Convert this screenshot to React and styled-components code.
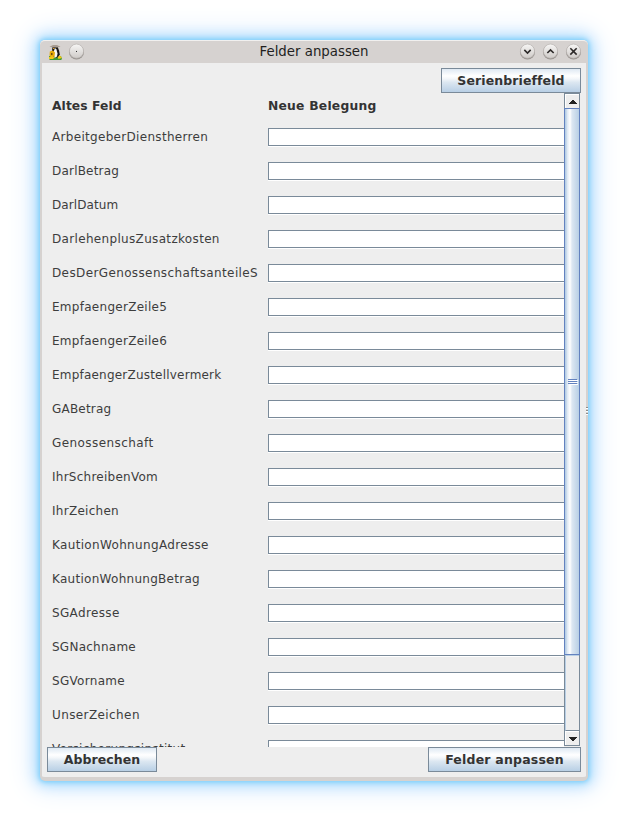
import React from 'react';
import styled, { createGlobalStyle } from 'styled-components';

const GlobalStyle = createGlobalStyle`
  * { box-sizing: border-box; }
  body { margin: 0; background: #fff; overflow: hidden; }
`;

const Desktop = styled.main`
  width: 628px;
  height: 821px;
  padding: 40px;
  background: #fff;
  font-family: 'DejaVu Sans', sans-serif;
  color: #333;
`;

const Window = styled.section`
  display: flex;
  flex-direction: column;
  width: 548px;
  height: 741px;
  border: solid #d6d2d0;
  border-width: 0 2px 4px;
  border-radius: 5px;
  background: #eee;
  box-shadow: 0 0 5px 1px #77cdfb, 0 0 14px 4px #a9dcfc, 0 0 28px 7px #dcebff;
`;

const TitleBar = styled.header`
  display: grid;
  grid-template-columns: 70px 1fr 70px;
  align-items: center;
  height: 23px;
  margin: 0 -2px;
  padding: 0 6px 1px;
  border-top: 1px solid #f1f0ef;
  border-radius: 5px 5px 0 0;
  background: #d6d2d0;
`;

const TitleGroup = styled.div`
  display: flex;
  align-items: center;
  gap: ${(p) => p.$gap}px;
  padding-left: ${(p) => (p.$end ? 0 : 1)}px;
  justify-content: ${(p) => (p.$end ? 'flex-end' : 'flex-start')};
`;

const Title = styled.h1`
  margin: 0;
  font-size: 13.33px;
  font-weight: 400;
  line-height: 20px;
  text-align: center;
  color: #221f1e;
  white-space: nowrap;
`;

const Body = styled.div`
  flex: 1;
  display: flex;
  flex-direction: column;
  min-height: 0;
  padding: 5px 5px;
`;

const ButtonRow = styled.div`
  display: flex;
  flex: none;
  justify-content: ${(p) => p.$justify};
`;

const Button = styled.button`
  width: ${(p) => p.$width}px;
  height: 25px;
  padding: 0;
  border: 1px solid #7a8a99;
  background: linear-gradient(#dfe9f3 0%, #fff 30%, #f4f7fa 42%, #dce7f1 58%, #b8cfe5 100%);
  font: bold 12.5px/22px 'DejaVu Sans', sans-serif;
  letter-spacing: ${(p) => p.$tracking || 0}px;
  color: #333;
`;

const ScrollPane = styled.div`
  flex: none;
  display: flex;
  height: 654px;
  padding-right: 1px;
  overflow: hidden;
`;

const Form = styled.div`
  flex: 1;
  padding-left: 5px;
`;

const FieldRow = styled.div`
  display: grid;
  grid-template-columns: 216px 1fr;
  height: ${(p) => p.$height || 34}px;
`;

const Heading = styled.div`
  padding-top: 5px;
  font-size: 12.3px;
  font-weight: 700;
  line-height: 16px;
  letter-spacing: ${(p) => p.$tracking}px;
`;

const Label = styled.label`
  height: 18px;
  font-size: 12px;
  line-height: 18px;
  letter-spacing: ${(p) => p.$tracking}px;
  white-space: nowrap;
  color: #3d3d3d;
`;

const Input = styled.input`
  width: 100%;
  height: 18px;
  padding: 0 3px;
  border: solid #7a8a99;
  border-width: 1px 0 1px 1px;
  border-radius: 0;
  outline: 0;
  background: #fff;
  box-shadow: 0 1px 0 #fff;
`;

const ScrollBar = styled.div`
  display: flex;
  flex-direction: column;
  width: 16px;
  height: 653px;
  border: 1px solid #7a8a99;
  background: #eee;
`;

const Arrow = styled.div`
  display: flex;
  flex: none;
  align-items: center;
  justify-content: center;
  height: 14px;
  padding-left: 1px;
  border: 1px solid #fff;
  border-width: 1px 0 0 1px;
`;

const Thumb = styled.div`
  display: flex;
  flex: none;
  align-items: center;
  justify-content: center;
  height: 547px;
  margin: 0 -1px;
  padding-left: 2px;
  border: 1px solid #6382bf;
  background: linear-gradient(90deg, #b8cfe5 0 1px, #dbe6f2 2px, #fff 5px, #dce7f2 7px, #b8cfe5 14px);
`;

const Track = styled.div`
  flex: 1;
  border-left: 1px solid #b8cfe5;
  border-top: 1px solid #b8cfe5;
  border-bottom: 1px solid #7a8a99;
`;

const Grip = styled.i`
  width: 2px;
  height: 8px;
  position: absolute;
  left: 586px;
  top: 407px;
  background: repeating-linear-gradient(#8f8b88 0 1px, #fff 1px 2px, #d6d2d0 2px 3px);
`;

const fields = [
  ['ArbeitgeberDienstherren', 0.31],
  ['DarlBetrag', 0.2],
  ['DarlDatum', 0.08],
  ['DarlehenplusZusatzkosten', 0.33],
  ['DesDerGenossenschaftsanteileS', 0.38],
  ['EmpfaengerZeile5', 0.28],
  ['EmpfaengerZeile6', 0.28],
  ['EmpfaengerZustellvermerk', 0.21],
  ['GABetrag', 0.2],
  ['Genossenschaft', 0.42],
  ['IhrSchreibenVom', 0.25],
  ['IhrZeichen', 0.28],
  ['KautionWohnungAdresse', 0.34],
  ['KautionWohnungBetrag', 0.28],
  ['SGAdresse', 0.35],
  ['SGNachname', 0.25],
  ['SGVorname', 0.3],
  ['UnserZeichen', 0.4],
  ['Versicherungsinstitut', 0.31],
];

function Penguin() {
  return (
    <svg width="16" height="18" viewBox="0 0 16 18">
      <path d="M2 13h12l1 3-1 1H3l-1-1z" fill="#3d9a32" />
      <path d="M5.500 3.500h5l1.500 4 .8 4-1.800 3H6L5 8z" fill="#161616" />
      <path d="M8 5l1.500 1.500 1 4-.5 3-2.500 1.500L6.500 9z" fill="#f7f7f4" />
      <path d="M2.800 8.500l3.200-1 2 2-.5 4-3 1-2-2z" fill="#e5aa0b" />
      <path d="M4 10h1.500v2H4z" fill="#6d4a10" />
      <path d="M2 14l3-1 2.500 1.500L6 16H2zM10.500 14l2.500-1.500 2 2.500-3.500 1z" fill="#f2c518" />
      <path d="M2.500 3.800L6 2h4l3.500 1.800L10 4.500H6z" fill="#a89c92" />
      <path d="M6 5h1.500v1H6z" fill="#e9a322" />
    </svg>
  );
}

const glyphs = {
  dot: 'M7.5 7.5h1v1h-1z',
  down: 'M5 6.5l3 3 3-3',
  up: 'M5 9.5l3-3 3 3',
  close: 'M5 5l6 6M11 5l-6 6',
};

function RoundButton({ kind }) {
  const id = `knob-${kind}`;
  return (
    <svg width="17" height="18" viewBox="0 0 16 17">
      <defs>
        <linearGradient id={id} x1="0" y1="0" x2="0" y2="1">
          <stop offset="0" stopColor="#f7f6f5" />
          <stop offset="1" stopColor="#cfcbc8" />
        </linearGradient>
      </defs>
      <circle cx="8" cy="8.5" r="7.1" fill="#98938f" />
      <circle cx="8" cy="7.700" r="6.7" fill={`url(#${id})`} stroke="#b5b0ad" strokeWidth=".6" />
      <path d={glyphs[kind]} fill={kind === 'dot' ? '#333' : 'none'} stroke="#2d2a29" strokeWidth={kind === 'dot' ? 0 : 1.5} />
    </svg>
  );
}

const ArrowIcon = ({ down }) => (
  <svg width="8" height="4" viewBox="0 0 8 4" shapeRendering="crispEdges">
    <path d={down ? 'M0 0h8v1h-1v1h-1v1h-1v1h-2v-1h-1v-1h-1v-1h-1z' : 'M3 0h2v1h1v1h1v1h1v1h-8v-1h1v-1h1v-1h1z'} fill="#222" />
  </svg>
);

const ThumbGrip = () => (
  <svg width="10" height="6" viewBox="0 0 10 6" shapeRendering="crispEdges">
    <path d="M1 1h9v1H1zM1 3h9v1H1zM1 5h9v1H1z" fill="#fff" />
    <path d="M0 0h9v1H0zM0 2h9v1H0zM0 4h9v1H0z" fill="#6382bf" />
  </svg>
);

export default function App() {
  return (
    <Desktop>
      <GlobalStyle />
      <Window>
        <TitleBar>
          <TitleGroup $gap={5}><Penguin /><RoundButton kind="dot" /></TitleGroup>
          <Title>Felder anpassen</Title>
          <TitleGroup $gap={6} $end>
            <RoundButton kind="down" /><RoundButton kind="up" /><RoundButton kind="close" />
          </TitleGroup>
        </TitleBar>
        <Body>
          <ButtonRow $justify="flex-end"><Button $width={140} $tracking={0.1}>Serienbrieffeld</Button></ButtonRow>
          <ScrollPane>
            <Form>
              <FieldRow $height={35}>
                <Heading $tracking={0.08}>Altes Feld</Heading>
                <Heading $tracking={0.24}>Neue Belegung</Heading>
              </FieldRow>
              {fields.map(([name, tracking]) => (
                <FieldRow key={name}>
                  <Label htmlFor={name} $tracking={tracking}>{name}</Label>
                  <Input id={name} />
                </FieldRow>
              ))}
            </Form>
            <ScrollBar>
              <Arrow><ArrowIcon /></Arrow>
              <Thumb><ThumbGrip /></Thumb>
              <Track />
              <Arrow><ArrowIcon down /></Arrow>
            </ScrollBar>
          </ScrollPane>
          <ButtonRow $justify="space-between">
            <Button $width={110} $tracking={0.05}>Abbrechen</Button>
            <Button $width={153} $tracking={0.2}>Felder anpassen</Button>
          </ButtonRow>
        </Body>
      </Window>
      <Grip />
    </Desktop>
  );
}
